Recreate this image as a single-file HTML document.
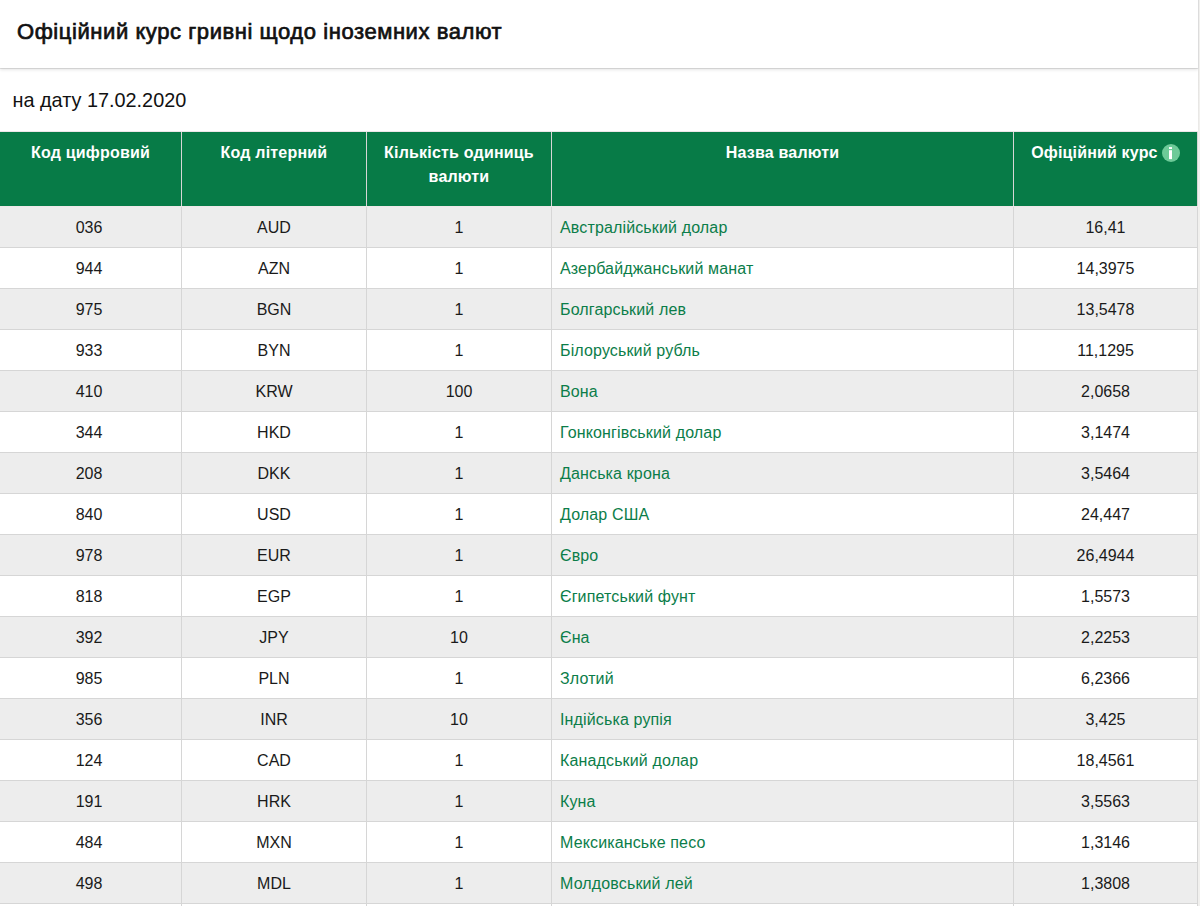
<!DOCTYPE html>
<html lang="uk">
<head>
<meta charset="utf-8">
<style>
*{box-sizing:border-box;margin:0;padding:0}
html,body{width:1200px;height:906px;overflow:hidden;background:#fff;font-family:"Liberation Sans",sans-serif;}
.hdr{position:absolute;left:0;top:0;width:1198px;height:68px;background:#fff;box-shadow:0 1px 0 rgba(0,0,0,0.1),0 2px 3px rgba(0,0,0,0.1);z-index:2}
.hdr h1{position:absolute;left:17px;top:18.5px;font-size:22px;font-weight:normal;-webkit-text-stroke:0.7px #111;letter-spacing:0.57px;color:#111;white-space:nowrap}
.date{position:absolute;left:12.5px;top:89px;font-size:19.85px;color:#111;white-space:nowrap}
.tbl{position:absolute;left:0;top:131px;width:1198px;border-top:1px solid #ece6e8}
.th{display:flex;height:75px;background:#077b47;color:#fff;font-weight:bold;font-size:16px;line-height:24px;text-align:center;letter-spacing:0.2px;border-bottom:1px solid #eee8e9}
.th .c{padding-top:9px}
.c{border-right:1px solid #d6d6d6;flex:none}
.c1{width:182px}.c2{width:185px}.c3{width:185px}.c4{width:462px}.c5{width:184px}
.r{display:flex;height:41px;border-bottom:1px solid #d6d6d6;font-size:16px;color:#1a1a1a;line-height:42px;text-align:center;background:#fff}
.r.odd{background:#ededed}
.r .c4{text-align:left;padding-left:8px;color:#0b7d49;letter-spacing:0.14px}
.r .c1{padding-right:3px}
.info{display:inline-block;width:18px;height:18px;border-radius:50%;background:#6dca98;vertical-align:-4px;margin-left:4.2px;position:relative}
.rs1{position:absolute;left:1198px;top:0;width:1px;height:906px;background:linear-gradient(#dcdcdc 0,#dcdcdc 69px,#e4e3e1 69px,#ebeae8 131px,#f1f0ee 131px);z-index:4}
.rs2{position:absolute;left:1198px;top:0;width:2px;height:906px;background:#f1f0ee;z-index:3}
</style>
</head>
<body>
<div class="hdr"><h1>Офіційний курс гривні щодо іноземних валют</h1></div>
<div class="date">на дату 17.02.2020</div>
<div class="tbl">
<div class="th"><div class="c c1">Код цифровий</div><div class="c c2">Код літерний</div><div class="c c3">Кількість одиниць<br>валюти</div><div class="c c4">Назва валюти</div><div class="c c5" style="letter-spacing:0.17px">Офіційний курс<span class="info"><svg width="18" height="18" viewBox="0 0 18 18" style="position:absolute;left:0;top:0"><rect x="7" y="3.1" width="3" height="1.9" fill="#fff"/><rect x="7" y="6.2" width="3" height="8.9" fill="#fff"/></svg></span></div></div>
<div class="r odd"><div class="c c1">036</div><div class="c c2">AUD</div><div class="c c3">1</div><div class="c c4"><span>Австралійський долар</span></div><div class="c c5">16,41</div></div>
<div class="r"><div class="c c1">944</div><div class="c c2">AZN</div><div class="c c3">1</div><div class="c c4"><span>Азербайджанський манат</span></div><div class="c c5">14,3975</div></div>
<div class="r odd"><div class="c c1">975</div><div class="c c2">BGN</div><div class="c c3">1</div><div class="c c4"><span>Болгарський лев</span></div><div class="c c5">13,5478</div></div>
<div class="r"><div class="c c1">933</div><div class="c c2">BYN</div><div class="c c3">1</div><div class="c c4"><span>Білоруський рубль</span></div><div class="c c5">11,1295</div></div>
<div class="r odd"><div class="c c1">410</div><div class="c c2">KRW</div><div class="c c3">100</div><div class="c c4"><span>Вона</span></div><div class="c c5">2,0658</div></div>
<div class="r"><div class="c c1">344</div><div class="c c2">HKD</div><div class="c c3">1</div><div class="c c4"><span>Гонконгівський долар</span></div><div class="c c5">3,1474</div></div>
<div class="r odd"><div class="c c1">208</div><div class="c c2">DKK</div><div class="c c3">1</div><div class="c c4"><span>Данська крона</span></div><div class="c c5">3,5464</div></div>
<div class="r"><div class="c c1">840</div><div class="c c2">USD</div><div class="c c3">1</div><div class="c c4"><span>Долар США</span></div><div class="c c5">24,447</div></div>
<div class="r odd"><div class="c c1">978</div><div class="c c2">EUR</div><div class="c c3">1</div><div class="c c4"><span>Євро</span></div><div class="c c5">26,4944</div></div>
<div class="r"><div class="c c1">818</div><div class="c c2">EGP</div><div class="c c3">1</div><div class="c c4"><span>Єгипетський фунт</span></div><div class="c c5">1,5573</div></div>
<div class="r odd"><div class="c c1">392</div><div class="c c2">JPY</div><div class="c c3">10</div><div class="c c4"><span>Єна</span></div><div class="c c5">2,2253</div></div>
<div class="r"><div class="c c1">985</div><div class="c c2">PLN</div><div class="c c3">1</div><div class="c c4"><span>Злотий</span></div><div class="c c5">6,2366</div></div>
<div class="r odd"><div class="c c1">356</div><div class="c c2">INR</div><div class="c c3">10</div><div class="c c4"><span>Індійська рупія</span></div><div class="c c5">3,425</div></div>
<div class="r"><div class="c c1">124</div><div class="c c2">CAD</div><div class="c c3">1</div><div class="c c4"><span>Канадський долар</span></div><div class="c c5">18,4561</div></div>
<div class="r odd"><div class="c c1">191</div><div class="c c2">HRK</div><div class="c c3">1</div><div class="c c4"><span>Куна</span></div><div class="c c5">3,5563</div></div>
<div class="r"><div class="c c1">484</div><div class="c c2">MXN</div><div class="c c3">1</div><div class="c c4"><span>Мексиканське песо</span></div><div class="c c5">1,3146</div></div>
<div class="r odd"><div class="c c1">498</div><div class="c c2">MDL</div><div class="c c3">1</div><div class="c c4"><span>Молдовський лей</span></div><div class="c c5">1,3808</div></div>
<div class="r"><div class="c c1">428</div><div class="c c2">LVL</div><div class="c c3">1</div><div class="c c4"><span>Лат</span></div><div class="c c5">1,0000</div></div>
</div>
<div class="rs1"></div><div class="rs2"></div>
</body>
</html>
